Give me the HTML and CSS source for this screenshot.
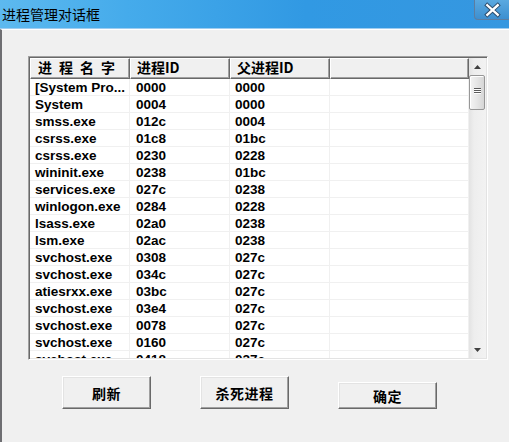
FILE: index.html
```html
<!DOCTYPE html>
<html>
<head>
<meta charset="utf-8">
<link rel="stylesheet" href="styles.css">
</head>
<body>
<div class="window">
  <div class="titlebar">
    <span class="title">进程管理对话框</span>
    <div class="close">
      <svg width="37" height="20" viewBox="0 0 37 20">
        <path d="M13 5 L24 15 M24 5 L13 15" stroke="#2a4a6a" stroke-width="4.5" stroke-linecap="square"/>
        <path d="M13 5 L24 15 M24 5 L13 15" stroke="#ffffff" stroke-width="2.5" stroke-linecap="square"/>
      </svg>
    </div>
  </div>
  <div class="client">
    <div class="listview">
      <div class="lv-main">
        <div class="lv-header">
          <div class="hcell c1 spaced">进程名字</div>
          <div class="hcell c2">进程ID</div>
          <div class="hcell c3">父进程ID</div>
          <div class="hcell c4"></div>
        </div>
        <div class="lv-body">
          <div class="row"><div class="cell c1">[System Pro...</div><div class="cell c2">0000</div><div class="cell c3">0000</div><div class="cell c4"></div></div>
          <div class="row"><div class="cell c1">System</div><div class="cell c2">0004</div><div class="cell c3">0000</div><div class="cell c4"></div></div>
          <div class="row"><div class="cell c1">smss.exe</div><div class="cell c2">012c</div><div class="cell c3">0004</div><div class="cell c4"></div></div>
          <div class="row"><div class="cell c1">csrss.exe</div><div class="cell c2">01c8</div><div class="cell c3">01bc</div><div class="cell c4"></div></div>
          <div class="row"><div class="cell c1">csrss.exe</div><div class="cell c2">0230</div><div class="cell c3">0228</div><div class="cell c4"></div></div>
          <div class="row"><div class="cell c1">wininit.exe</div><div class="cell c2">0238</div><div class="cell c3">01bc</div><div class="cell c4"></div></div>
          <div class="row"><div class="cell c1">services.exe</div><div class="cell c2">027c</div><div class="cell c3">0238</div><div class="cell c4"></div></div>
          <div class="row"><div class="cell c1">winlogon.exe</div><div class="cell c2">0284</div><div class="cell c3">0228</div><div class="cell c4"></div></div>
          <div class="row"><div class="cell c1">lsass.exe</div><div class="cell c2">02a0</div><div class="cell c3">0238</div><div class="cell c4"></div></div>
          <div class="row"><div class="cell c1">lsm.exe</div><div class="cell c2">02ac</div><div class="cell c3">0238</div><div class="cell c4"></div></div>
          <div class="row"><div class="cell c1">svchost.exe</div><div class="cell c2">0308</div><div class="cell c3">027c</div><div class="cell c4"></div></div>
          <div class="row"><div class="cell c1">svchost.exe</div><div class="cell c2">034c</div><div class="cell c3">027c</div><div class="cell c4"></div></div>
          <div class="row"><div class="cell c1">atiesrxx.exe</div><div class="cell c2">03bc</div><div class="cell c3">027c</div><div class="cell c4"></div></div>
          <div class="row"><div class="cell c1">svchost.exe</div><div class="cell c2">03e4</div><div class="cell c3">027c</div><div class="cell c4"></div></div>
          <div class="row"><div class="cell c1">svchost.exe</div><div class="cell c2">0078</div><div class="cell c3">027c</div><div class="cell c4"></div></div>
          <div class="row"><div class="cell c1">svchost.exe</div><div class="cell c2">0160</div><div class="cell c3">027c</div><div class="cell c4"></div></div>
          <div class="row"><div class="cell c1">svchost.exe</div><div class="cell c2">0418</div><div class="cell c3">027c</div><div class="cell c4"></div></div>
        </div>
      </div>
      <div class="scrollbar">
        <div class="arrow">
          <svg width="7" height="4" viewBox="0 0 7 4"><path d="M3.5 0 L7 4 L0 4 Z" fill="#404040"/></svg>
        </div>
        <div class="thumb">
          <div class="grip"></div><div class="grip"></div><div class="grip"></div>
        </div>
        <div class="track"></div>
        <div class="arrow">
          <svg width="7" height="4" viewBox="0 0 7 4"><path d="M0 0 L7 0 L3.5 4 Z" fill="#404040"/></svg>
        </div>
      </div>
    </div>
    <div class="buttons">
      <button class="btn btn-big">刷新</button>
      <button class="btn btn-big">杀死进程</button>
      <button class="btn btn-ok">确定</button>
    </div>
  </div>
</div>
</body>
</html>
```
FILE: styles.css
```css
html, body {
  margin: 0;
  padding: 0;
  background: #f0f0f0;
}
.window {
  width: 509px;
  height: 442px;
  display: flex;
  flex-direction: column;
  overflow: hidden;
}
.titlebar {
  height: 29px;
  flex: none;
  display: flex;
  justify-content: space-between;
  align-items: flex-start;
  background: linear-gradient(to right, #5db9ef 0%, #45abeb 25%, #3199e3 60%, #3597e0 100%);
  border-bottom: 1px solid #9fcdf0;
  box-sizing: border-box;
}
.title {
  font-family: "Noto Sans CJK SC", sans-serif;
  font-size: 14px;
  color: #000;
  margin: 5px 0 0 2px;
  line-height: 18px;
}
.close {
  width: 37px;
  height: 20px;
  margin-right: -2px;
  border: 1px solid #5d7da0;
  border-top: none;
  border-radius: 0 0 4px 4px;
  background: linear-gradient(to bottom, #5aa9e0, #3d8fd0);
  box-sizing: border-box;
  display: flex;
  align-items: center;
  justify-content: center;
}
.close svg { display: block; }
.client {
  flex: 1;
  border-left: 2px solid #6e6e72;
  border-top: 1px solid #ffffff;
  background: #f0f0f0;
  padding: 26px 0 0 26px;
  box-sizing: border-box;
}
.listview {
  width: 460px;
  height: 304px;
  box-sizing: border-box;
  border-top: 1px solid #a0a0a0;
  border-left: 1px solid #a0a0a0;
  border-right: 1px solid #ffffff;
  border-bottom: 1px solid #ffffff;
  box-shadow: inset 1px 1px 0 #696969, inset -1px -1px 0 #e3e3e3;
  padding: 1px;
  display: flex;
  background: #fff;
}
.lv-main {
  flex: 1;
  overflow: hidden;
  display: flex;
  flex-direction: column;
}
.lv-header {
  display: flex;
  height: 21px;
  flex: none;
  background: #f0f0f0;
}
.hcell {
  box-sizing: border-box;
  height: 21px;
  border-top: 1px solid #ffffff;
  border-left: 1px solid #ffffff;
  border-right: 1px solid #696969;
  border-bottom: 1px solid #696969;
  box-shadow: inset -1px -1px 0 #a0a0a0;
  font-family: "Noto Sans CJK SC", sans-serif;
  font-weight: 700;
  font-size: 14px;
  line-height: 17px;
  padding-left: 6px;
  color: #000;
  white-space: nowrap;
}
.hcell.spaced { letter-spacing: 7px; padding-left: 7px; }
.c1 { width: 100px; flex: none; }
.c2 { width: 100px; flex: none; }
.c3 { width: 100px; flex: none; }
.c4 { flex: 1; }
.lv-body { flex: 1; overflow: hidden; }
.row {
  display: flex;
  height: 17px;
  box-sizing: border-box;
  border-bottom: 1px solid #f0f0f0;
}
.cell {
  box-sizing: border-box;
  border-right: 1px solid #f0f0f0;
  font-family: "Liberation Sans", Arial, sans-serif;
  font-weight: 700;
  font-size: 13.5px;
  line-height: 17px;
  color: #000;
  padding-left: 5px;
  white-space: nowrap;
  overflow: hidden;
}
.cell.c2 { padding-left: 6px; }
.cell.c3 { padding-left: 5px; }
.scrollbar {
  width: 17px;
  flex: none;
  display: flex;
  flex-direction: column;
  background: linear-gradient(to right, #e3e3e3, #eeeeee 30%, #f2f2f2);
}
.arrow {
  height: 17px;
  flex: none;
  display: flex;
  align-items: center;
  justify-content: center;
}
.arrow svg { display: block; }
.thumb {
  height: 35px;
  margin: 0 1px 0 0;
  box-sizing: border-box;
  border: 1px solid #979797;
  border-radius: 2px;
  background: linear-gradient(to right, #f4f4f4, #e6e6e6 50%, #d6d6d6);
  box-shadow: inset 1px 1px 0 #ffffff;
  display: flex;
  flex-direction: column;
  align-items: center;
  justify-content: center;
  gap: 1px;
  padding-bottom: 4px;
}
.grip {
  width: 7px;
  height: 1px;
  background: #5a5a5a;
  box-shadow: 0 1px 0 #ffffff;
}
.track { flex: 1; }
.buttons {
  display: flex;
  align-items: flex-end;
  gap: 49px;
  margin: 16px 0 0 34px;
}
.btn {
  margin: 0;
  padding: 0;
  background: #f0f0f0;
  border-top: 1px solid #ffffff;
  border-left: 1px solid #ffffff;
  border-right: 1px solid #696969;
  border-bottom: 1px solid #696969;
  box-shadow: inset -1px -1px 0 #a0a0a0, inset 1px 1px 0 #e3e3e3;
  font-family: "Noto Sans CJK SC", sans-serif;
  font-weight: 700;
  font-size: 14px;
  color: #000;
  box-sizing: border-box;
  letter-spacing: 0.5px;
}
.btn-big { width: 89px; height: 33px; }
.btn-ok { width: 99px; height: 27px; }
```
